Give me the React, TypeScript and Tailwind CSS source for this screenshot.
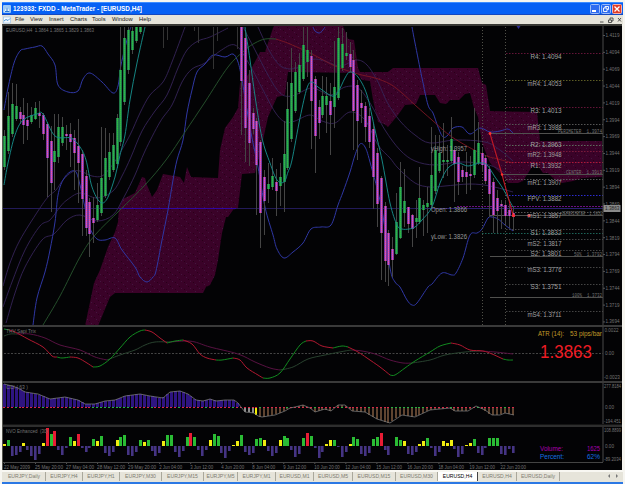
import type { ReactNode } from 'react';

type Pt = [number, number];

const STEP = 3.883;
const barX = (i: number) => 4.6 + STEP * i;

// [index, bodyTop, bodyBottom, wickTop, wickBottom, up]
const candles: [number, number, number, number, number, number][] = [
  [0, 136, 167, 130, 170, 1], [1, 116, 151, 92, 154, 1], [2, 104, 134, 83, 137, 1], [3, 106, 119, 84, 121, 1],
  [4, 112, 119, 107, 124, 0], [5, 115, 125, 98, 144, 0], [6, 120, 126, 103, 140, 0], [7, 115, 122, 107, 124, 1],
  [8, 108, 119, 102, 120, 1], [9, 113, 116, 101, 128, 0], [10, 115, 134, 113, 140, 0], [11, 124, 158, 122, 197, 0],
  [12, 141, 183, 126, 212, 0], [13, 151, 162, 114, 190, 1], [14, 127, 157, 114, 163, 1], [15, 127, 143, 117, 146, 1],
  [16, 134, 136, 125, 150, 0], [17, 134, 142, 123, 167, 0], [18, 138, 153, 130, 190, 0], [19, 146, 163, 119, 203, 0],
  [20, 154, 199, 150, 236, 0], [21, 176, 228, 170, 236, 0], [22, 202, 234, 198, 257, 0], [23, 218, 223, 197, 243, 0],
  [24, 205, 220, 183, 222, 1], [25, 178, 213, 127, 216, 1], [26, 158, 196, 128, 198, 1], [27, 152, 177, 133, 180, 1],
  [28, 145, 170, 133, 172, 1], [29, 118, 164, 114, 168, 1], [30, 70, 142, 27, 146, 1], [31, 38, 102, 27, 105, 1],
  [32, 30, 70, 27, 74, 1], [33, 31, 50, 27, 54, 1], [34, 27, 41, 27, 43, 1], [35, 27, 32, 27, 34, 1],
  [61, 27, 81, 27, 135, 0], [62, 38, 128, 30, 162, 0], [63, 83, 143, 70, 166, 0], [64, 113, 129, 108, 134, 0],
  [65, 121, 165, 118, 215, 0], [66, 142, 213, 140, 248, 0], [67, 177, 201, 170, 235, 0], [68, 184, 189, 163, 203, 1],
  [69, 176, 187, 158, 190, 1], [70, 182, 191, 169, 216, 0], [71, 177, 186, 163, 206, 1], [72, 154, 182, 121, 212, 1],
  [73, 109, 168, 82, 170, 1], [74, 83, 139, 48, 142, 1], [75, 72, 111, 62, 113, 1], [76, 65, 92, 53, 94, 1],
  [77, 45, 79, 27, 81, 1], [78, 50, 62, 27, 77, 1], [79, 56, 101, 50, 149, 0], [80, 79, 136, 76, 173, 0],
  [81, 107, 123, 100, 139, 0], [82, 96, 115, 76, 118, 1], [83, 96, 105, 77, 133, 1], [84, 101, 115, 83, 155, 0],
  [85, 87, 107, 41, 128, 1], [86, 38, 98, 27, 100, 1], [87, 44, 68, 28, 71, 1], [88, 53, 56, 32, 60, 1],
  [89, 54, 67, 42, 72, 0], [90, 60, 111, 50, 150, 0], [91, 85, 121, 80, 160, 0], [92, 103, 108, 90, 123, 0],
  [93, 106, 127, 102, 142, 0], [94, 116, 142, 108, 148, 0], [95, 129, 177, 124, 209, 0], [96, 153, 204, 148, 227, 0],
  [97, 178, 233, 176, 280, 0], [98, 206, 261, 202, 282, 0], [99, 233, 265, 230, 286, 0], [100, 249, 260, 237, 277, 0],
  [101, 222, 254, 193, 255, 1], [102, 187, 238, 162, 239, 1], [103, 201, 213, 169, 227, 1], [104, 207, 224, 207, 233, 0],
  [105, 215, 229, 214, 247, 0], [106, 218, 222, 200, 238, 1], [107, 198, 222, 167, 224, 1], [108, 205, 210, 200, 236, 1],
  [109, 203, 207, 187, 233, 1], [110, 175, 205, 127, 208, 1], [111, 150, 191, 135, 194, 1], [112, 153, 171, 135, 173, 1],
  [113, 160, 162, 123, 178, 1], [114, 160, 162, 145, 176, 1], [115, 139, 161, 117, 163, 1], [116, 150, 164, 147, 202, 0],
  [117, 157, 182, 152, 195, 0], [118, 170, 177, 166, 182, 0], [119, 172, 177, 152, 194, 0], [120, 174, 176, 156, 190, 0],
  [121, 150, 175, 108, 178, 1], [122, 143, 163, 122, 165, 1], [123, 153, 165, 148, 172, 0], [124, 158, 181, 155, 184, 0],
  [125, 169, 194, 166, 217, 0], [126, 182, 215, 178, 233, 0], [127, 198, 211, 190, 233, 0], [128, 204, 206, 200, 229, 0],
  [129, 205, 216, 200, 225, 0], [130, 210, 216, 204, 228, 0], [131, 213, 217, 206, 231, 0],
];

const highWicks: [number, number][] = [[41, 48], [42, 40], [49, 31], [50, 43], [54, 69], [55, 41], [60, 49]];

const cloud: Pt[] = [
  [85, 326], [94, 283], [100, 270], [108, 247], [115, 232], [118, 222], [119, 208], [123, 199], [135, 193], [142, 177],
  [145, 178], [147, 185], [152, 197], [157, 190], [163, 174], [180, 177], [184, 183], [187, 167], [191, 177], [218, 178],
  [220, 150], [225, 128], [233, 117], [238, 108], [240, 83], [248, 75], [260, 52], [265, 52], [273, 28], [274, 26],
  [343, 26], [348, 39], [354, 40], [358, 68], [360, 72], [388, 72], [393, 68], [478, 68], [482, 83], [486, 85],
  [490, 111], [537, 112], [540, 141], [602, 141], [602, 177], [582, 178], [573, 181], [562, 183], [555, 180], [548, 173],
  [543, 173], [538, 166], [532, 167], [528, 173], [523, 181], [518, 183], [508, 183], [500, 173], [490, 163], [482, 143],
  [478, 117], [474, 108], [470, 93], [465, 94], [459, 100], [450, 100], [446, 104], [440, 103], [435, 95], [420, 95],
  [416, 104], [405, 105], [398, 115], [388, 127], [384, 124], [378, 122], [373, 100], [370, 81], [362, 80], [357, 73],
  [288, 72], [285, 95], [277, 97], [268, 117], [263, 140], [255, 173], [242, 174], [238, 208], [233, 210], [228, 217],
  [226, 217], [222, 233], [218, 260], [215, 275], [210, 285], [206, 287], [203, 293], [115, 293], [110, 297], [98, 326],
];

const blueBands: Pt[][] = [
  [[4, 110], [8, 88], [14, 63], [20, 51], [25, 49], [35, 47], [42, 46], [48, 54], [55, 65], [58, 85], [68, 92], [78, 91], [83, 79], [90, 73], [102, 82], [113, 93], [118, 86], [121, 65], [128, 36], [131, 27]],
  [[33, 325], [37, 298], [45, 272], [50, 250], [55, 222], [58, 195], [63, 180], [70, 172], [76, 172], [80, 185], [84, 203], [90, 228], [97, 239], [105, 240], [115, 238], [122, 250], [135, 267], [140, 277], [147, 282], [153, 277], [156, 271], [162, 240], [168, 210], [173, 180], [177, 160], [183, 140], [187, 113], [192, 90], [197, 72], [205, 64], [213, 55], [225, 57], [233, 54], [238, 62], [242, 80], [247, 110], [252, 138], [258, 167], [265, 207], [273, 235], [277, 249], [284, 258], [293, 252], [303, 243], [311, 229], [321, 227], [331, 225], [338, 205], [343, 192], [350, 172], [355, 155], [360, 144], [365, 147], [370, 162], [382, 210], [390, 268], [395, 282], [400, 287], [407, 300], [412, 305], [417, 303], [428, 287], [432, 284], [442, 273], [452, 275], [456, 273], [463, 258], [470, 235], [477, 233], [482, 229], [488, 218], [492, 217], [498, 219], [505, 225], [513, 231]],
  [[313, 27], [315, 31], [319, 33], [322, 31], [325, 27]],
  [[412, 27], [415, 43], [422, 78], [428, 105], [433, 113], [438, 127], [443, 137], [448, 135], [453, 128], [462, 127], [470, 134], [480, 128], [490, 132], [500, 131], [508, 129], [513, 133]],
];

const dimBands: Pt[][] = [
  [[3, 286], [10, 263], [20, 240], [38, 211], [48, 197], [56, 190], [63, 180], [72, 172], [80, 171], [92, 176], [102, 176], [110, 168], [117, 158], [130, 135], [140, 113], [150, 95], [163, 82], [172, 62], [185, 27]],
  [[3, 307], [12, 282], [25, 250], [40, 226], [50, 220], [60, 207], [67, 200], [80, 193], [97, 198], [113, 191], [122, 176], [131, 157], [142, 131], [155, 111], [167, 95], [178, 68], [187, 50], [198, 41], [210, 37], [228, 28]],
  [[6, 323], [15, 293], [25, 267], [42, 240], [54, 234], [67, 220], [80, 215], [97, 221], [113, 215], [124, 197], [135, 175], [145, 151], [160, 122], [172, 105], [182, 82], [192, 69], [205, 63], [220, 51], [235, 45], [248, 62], [262, 88], [275, 112], [285, 122], [295, 121], [310, 115], [322, 121], [335, 123], [350, 112], [365, 120], [378, 145], [390, 158], [398, 168], [415, 183], [430, 187], [445, 186], [470, 184], [490, 186], [513, 192]],
  [[258, 27], [270, 52], [282, 67], [297, 68], [310, 60], [322, 60], [340, 66], [356, 60], [367, 65], [378, 82], [387, 102], [400, 121], [415, 135], [430, 143], [455, 140], [485, 142], [500, 150], [513, 161]],
  [[243, 27], [255, 50], [268, 75], [280, 93], [292, 96], [312, 88], [330, 95], [345, 87], [358, 88], [370, 103], [385, 130], [400, 150], [415, 161], [435, 165], [460, 162], [485, 164], [500, 170], [513, 180]],
];

const teal: Pt[][] = [
  [[4, 185], [8, 163], [15, 135], [23, 120], [37, 114], [43, 114], [55, 136], [71, 138], [80, 147], [86, 160], [92, 187], [100, 202], [107, 199], [115, 177], [120, 155], [125, 135], [130, 100], [137, 63], [145, 27]],
  [[245, 27], [250, 60], [255, 96], [262, 138], [270, 163], [277, 180], [284, 182], [288, 172], [292, 160], [300, 118], [307, 88], [312, 82], [318, 87], [332, 96], [338, 92], [345, 78], [350, 72], [358, 77], [367, 95], [375, 130], [382, 160], [390, 203], [397, 225], [402, 229], [409, 229], [415, 227], [422, 220], [432, 207], [440, 183], [448, 168], [458, 163], [468, 166], [480, 163], [487, 165], [495, 177], [502, 187], [508, 198], [513, 207]],
];

const greenMa: Pt[] = [[43, 325], [60, 296], [80, 257], [95, 235], [120, 210], [145, 185], [166, 160], [185, 132], [205, 102], [228, 67], [245, 50], [255, 43], [265, 39], [276, 39]];
const redMa: Pt[] = [[276, 39], [290, 44], [312, 54], [335, 66], [358, 74], [375, 78], [390, 84], [402, 93], [415, 105], [432, 120], [452, 137], [482, 154], [498, 159], [513, 163]];

// label, label y, line y, line colour
const pivots: [string, number, number, string][] = [
  ['R4: 1.4094', 57, 53.5, '#641438'], ['mR4: 1.4053', 84, 80.5, '#5c5c24'], ['R3: 1.4013', 111, 107.5, '#641438'],
  ['mR3: 1.3988', 128, 124.5, '#555'], ['R2: 1.3963', 145, 145.5, '#5c6b5c'], ['mR2: 1.3948', 155, 151.5, '#7a1838'],
  ['R1: 1.3932', 166, 162.5, '#b01838'], ['mR1: 1.3907', 183, 179.5, '#555'], ['FPV: 1.3882', 199, 195.5, '#2c2cd0'],
  ['mS1: 1.3857', 216, 212.5, '#555'], ['S1: 1.3832', 233, 229.5, '#444'], ['mS2: 1.3817', 244, 239.5, '#444'],
  ['S2: 1.3801', 254, 250.5, '#444'], ['mS3: 1.3776', 270, 267.5, '#444'], ['S3: 1.3751', 287, 284.5, '#444'],
  ['mS4: 1.3711', 315, 311.5, '#444'],
];

// label, y, start x, text width
const fibs: [string, number, number, number][] = [
  ['PERIMETER  1.3974', 133.5, 490, 44], ['CENTER  1.3913', 174.5, 502, 36], ['DEPERIMETER  1.3852', 215.5, 490, 40],
  ['50%  1.3792', 256.5, 490, 28], ['100%  1.3732', 297.5, 490, 30],
];

const prices = ['1.4119', '1.4094', '1.4069', '1.4044', '1.4019', '1.3994', '1.3969', '1.3944', '1.3919', '1.3894', '1.3869', '1.3844', '1.3819', '1.3794', '1.3769', '1.3744', '1.3719', '1.3694'];

const tmaLine: [string, Pt[]][] = [
  ['g', [[4, 329], [9, 330]]],
  ['r', [[9, 330], [15, 332], [28, 339], [43, 347], [52, 356], [57, 357]]],
  ['g', [[57, 357], [62, 358], [70, 357]]],
  ['r', [[70, 357], [78, 358], [87, 363], [93, 367]]],
  ['g', [[93, 367], [100, 366], [110, 359], [120, 348], [130, 337], [140, 331], [145, 330]]],
  ['r', [[145, 330], [152, 332], [160, 338], [167, 343]]],
  ['g', [[167, 343], [175, 341], [183, 340]]],
  ['r', [[183, 340], [192, 344], [200, 354], [207, 358], [216, 360]]],
  ['g', [[216, 360], [222, 360], [233, 358]]],
  ['r', [[233, 358], [240, 360], [247, 368], [258, 375], [263, 378]]],
  ['g', [[263, 378], [270, 378], [280, 373], [290, 359], [300, 345], [306, 341]]],
  ['r', [[306, 341], [313, 341], [322, 346], [333, 348]]],
  ['g', [[333, 348], [342, 346], [348, 347]]],
  ['r', [[348, 347], [358, 352], [367, 358], [380, 367], [390, 375]]],
  ['g', [[390, 375], [395, 375], [405, 368], [415, 361], [430, 352], [440, 346], [451, 343]]],
  ['r', [[451, 343], [460, 345], [470, 350], [483, 351], [492, 354], [503, 359]]],
  ['g', [[503, 359], [508, 360], [513, 360]]],
];

const tmaSignal: [string, Pt[]][] = [
  ['g', [[4, 336], [10, 334], [17, 334]]],
  ['r', [[17, 334], [30, 334], [45, 338], [60, 345], [80, 350], [95, 357], [107, 360]]],
  ['g', [[107, 360], [120, 355], [135, 350], [145, 345], [155, 342], [170, 342]]],
  ['r', [[170, 342], [185, 341], [195, 342], [210, 347], [238, 354], [255, 362], [270, 368], [280, 370]]],
  ['g', [[280, 370], [293, 367], [308, 359], [325, 355], [345, 351], [352, 350]]],
  ['r', [[352, 350], [362, 351], [375, 354], [390, 360], [403, 363], [412, 363]]],
  ['g', [[412, 363], [430, 360], [445, 355], [465, 352], [480, 351]]],
  ['r', [[480, 351], [495, 352], [513, 354]]],
];

const cci: Pt[] = [
  [4, 384], [12, 386], [18, 388], [25, 392], [38, 394], [50, 399], [65, 397], [78, 400], [85, 404], [95, 404],
  [105, 401], [115, 400], [125, 396], [140, 394], [150, 396], [163, 398], [170, 392], [180, 391], [188, 394], [196, 400],
  [203, 401], [210, 399], [216, 401], [225, 400], [234, 400], [238, 403], [241, 407], [245, 412], [254, 413], [258, 416],
  [262, 417], [275, 415], [285, 411], [290, 408], [295, 407], [303, 405], [310, 408], [315, 412], [325, 409], [331, 411],
  [338, 405], [345, 405], [352, 411], [365, 412], [377, 419], [390, 423], [402, 415], [415, 417], [430, 410], [450, 408],
  [455, 411], [468, 411], [476, 406], [485, 410], [492, 415], [500, 415], [505, 413], [514, 415],
];

// signed bar heights, positive is up
const volume = [
  2, 6, -10, -9, -6, 3, -4, -10, -14, -8, 3, 18, 12, 15, -4, -9, -2, 9, 5, 12, -2, -6, -2, 7, 5, 10, -7, -10, -6, 6, 9, 11, -9, -10, -6,
  6, 4, 6, -5, -10, -7, 5, 11, 11, -6, -11, -5, 9, 13, 9, -4, -10, -4, 6, 12, 10, -7, -12, -5, 1, 5, 11, -6, -9, -7, 7, 8, 6, -5, -10,
  -7, 6, 10, 8, -4, -11, -8, 8, 13, 10, -2, -12, -6, 2, 6, 6, -1, -11, -6, 2, 9, 7, -8, -10, -7, 7, 9, 13, -4, -9, 0, 9, 6, 5, -8, -9,
  -6, 2, 5, 8, -2, -10, -6, 5, 3, 6, -3, -11, -8, 1, 3, 7, -7, -9, -2, 8, 8, 8, -8, -9, -3, -7,
];
const redVolume = [11, 13, 19, 48, 78, 97];
const yellowVolume = [0, 5, 10, 18, 24, 29, 36, 41, 53, 59, 60, 67, 71, 83, 84, 89, 103, 107, 108, 113, 114, 115, 119, 120];

// label, text width
const dates: [string, number][] = [
  ['22 May 2009', 26], ['25 May 20:00', 28], ['27 May 04:00', 28], ['28 May 12:00', 28], ['29 May 20:00', 28],
  ['2 Jun 04:00', 23], ['3 Jun 12:00', 23], ['4 Jun 20:00', 23], ['8 Jun 04:00', 23], ['9 Jun 12:00', 23],
  ['10 Jun 20:00', 25.5], ['12 Jun 04:00', 25.5], ['15 Jun 12:00', 25.5], ['16 Jun 20:00', 25.5],
  ['18 Jun 04:00', 25.5], ['19 Jun 12:00', 25.5], ['22 Jun 20:00', 25.5],
];

const menus: [string, string][] = [
  ['File', 'w-[15px]'], ['View', 'w-[19px]'], ['Insert', 'w-[21px]'], ['Charts', 'w-[22px]'],
  ['Tools', 'w-[20px]'], ['Window', 'w-[27px]'], ['Help', 'w-[14px]'],
];

const tabs: [string, string][] = [
  ['EURJPY,Daily', 'w-[43px]'], ['EURJPY,H4', 'w-[37px]'], ['EURJPY,H1', 'w-[37px]'], ['EURJPY,M30', 'w-[42px]'],
  ['EURJPY,M15', 'w-[42px]'], ['EURJPY,M5', 'w-[34px]'], ['EURJPY,M1', 'w-[38px]'], ['EURUSD,M1', 'w-[38px]'],
  ['EURUSD,M5', 'w-[39px]'], ['EURUSD,M15', 'w-[43px]'], ['EURUSD,M30', 'w-[42px]'], ['EURUSD,H4', 'w-[40px]'],
  ['EURUSD,H4', 'w-[39px]'], ['EURUSD,Daily', 'w-[43px]'],
];

const curve = (p: Pt[]) => {
  let d = `M${p[0][0]} ${p[0][1]}`;
  for (let i = 0; i < p.length - 1; i++) {
    const a = p[i - 1] || p[i];
    const b = p[i];
    const c = p[i + 1];
    const e = p[i + 2] || c;
    d += `C${b[0] + (c[0] - a[0]) / 6} ${b[1] + (c[1] - a[1]) / 6} ${c[0] - (e[0] - b[0]) / 6} ${c[1] - (e[1] - b[1]) / 6} ${c[0]} ${c[1]}`;
  }
  return d;
};

const valueAt = (points: Pt[], x: number) => {
  const k = points.findIndex((p) => p[0] >= x);
  if (k <= 0) return points[k === 0 ? 0 : points.length - 1][1];
  const [x0, y0] = points[k - 1];
  const [x1, y1] = points[k];
  return y0 + ((y1 - y0) * (x - x0)) / (x1 - x0);
};

interface LabelProps {
  x: number;
  y: number;
  w: number;
  size?: number;
  fill?: string;
  children: ReactNode;
}

const Label = ({ x, y, w, size = 5.2, fill = '#747474', children }: LabelProps) => (
  <text x={x} y={y} fontSize={size} textLength={w} lengthAdjust="spacingAndGlyphs" fill={fill} className="whitespace-pre">
    {children}
  </text>
);

const PriceChart = () => (
  <svg viewBox="3 26 619 299" className="block w-[619px] h-[299px] shrink-0" fill="none">
    <defs>
      <pattern id="cloudDots" width="9" height="7" patternUnits="userSpaceOnUse">
        <rect width="9" height="7" fill="#3a0228" />
        <path d="M1 1h1v1h-1zM6 4h1v1h-1z" fill="#44163f" />
        <path d="M4 2h1v1h-1zM8 6h1v1h-1z" fill="#280018" />
      </pattern>
    </defs>
    <path d={`M${cloud.map((p) => p.join(' ')).join('L')}Z`} fill="url(#cloudDots)" />

    <path d="M3 208.5H603" stroke="#221a58" />
    <path d="M119 208.5H236" stroke="#3006a0" />
    <path d="M415 208.5H603" stroke="#2a2070" />

    {dimBands.map((b, i) => <path key={i} d={curve(b)} stroke="#352458" strokeWidth={0.9} />)}
    {blueBands.map((b, i) => <path key={i} d={curve(b)} stroke="#2f37a4" />)}
    <path d={curve(greenMa)} stroke="#28562f" strokeWidth={0.9} />
    <path d={curve(redMa)} stroke="#7d1624" strokeWidth={0.9} />

    <path d="M482.5 27V325M505.5 27V325" stroke="#505048" strokeDasharray="1 2" />
    {pivots.map(([label, , y, color]) => <path key={label} d={`M506 ${y}H603`} stroke={color} strokeDasharray="1.5 1.5" />)}
    <path d="M457 206.5H603" stroke="#6a1080" strokeDasharray="2 1" />
    <path d="M482 233.5H603" stroke="#1c6458" strokeDasharray="1.5 1.5" />
    {fibs.map(([label, y, x]) => <path key={label} d={`M${x} ${y}H603`} stroke="#50504e" />)}

    {highWicks.map(([i, y]) => <path key={i} d={`M${Math.round(barX(i)) - 0.5} 27V${y}`} stroke="#333333" />)}
    {candles.map(([i, top, bottom, high, low, up]) => {
      const x = Math.round(barX(i) - 0.6);
      return (
        <g key={i}>
          <rect x={x} y={high} width={1} height={low - high} fill="#444444" />
          <rect x={x - 1} y={top} width={3} height={bottom - top} fill={up ? '#1f7a48' : '#7a369c'} />
          <rect x={x} y={top} width={1} height={bottom - top} fill={up ? '#2da454' : '#b858e8'} />
          <path d={`M${x + 0.5} ${top}V${bottom}`} stroke={up ? '#30c03c' : '#f45488'} strokeDasharray="1 1" />
        </g>
      );
    })}
    {teal.map((t, i) => <path key={i} d={curve(t)} stroke="#168a88" strokeWidth={0.95} />)}

    <path d="M490 133.5L502 174.5L513 215" stroke="#c01826" strokeWidth={1.1} />
    <g fill="#ff3030">
      <circle cx={490} cy={133.5} r={1.4} />
      <circle cx={502} cy={174.5} r={1.2} />
      <circle cx={513.5} cy={215.5} r={1.6} />
      <circle cx={529} cy={215.5} r={1.6} />
    </g>
    <path d="M516.5 26h4l-2 3z" fill="#2a2a90" />

    {pivots.map(([label, y]) => {
      const w = label.length > 10 ? 34 : 31;
      return <Label key={label} x={561.5 - w} y={y + 2.3} w={w} size={6.5} fill="#a2a2a2">{label}</Label>;
    })}
    <Label x={431} y={151} w={36} size={6.5} fill="#989898">yHigh: 1.3957</Label>
    <Label x={431} y={212} w={36} size={6.5} fill="#989898">Open: 1.3866</Label>
    <Label x={431} y={239} w={36} size={6.5} fill="#989898">yLow: 1.3826</Label>
    <g fontFamily="Liberation Mono">
      {fibs.map(([label, y, , w]) => <Label key={label} x={602 - w} y={y - 1} w={w} size={4.8}>{label}</Label>)}
    </g>
    <Label x={6} y={32.2} w={88}>EURUSD,H4  1.3864 1.3865 1.3829 1.3863</Label>

    <path d="M603 26V325" stroke="#4a4a4a" />
    {prices.map((p, i) => (
      <g key={p}>
        <path d={`M603 ${35.5 + i * 16.85}h2`} stroke="#555" />
        <Label x={605.5} y={(i === 17 ? 36.4 : 37.3) + i * 16.85} w={14}>{p}</Label>
      </g>
    ))}
    <rect x={603.5} y={205} width={17} height={7} fill="#8a8a8a" />
    <Label x={605} y={210.4} w={14.5} fill="#222">1.3863</Label>
  </svg>
);

const TmaPanel = () => (
  <svg viewBox="3 327 619 54" className="block w-[619px] h-[54px] shrink-0" fill="none">
    <path d="M4 353.5H603" stroke="#444" strokeDasharray="2 1.5" />
    {tmaSignal.map(([c, p], i) => <path key={i} d={curve(p)} stroke={c === 'g' ? '#2a4430' : '#5c1244'} strokeWidth={0.95} />)}
    {tmaLine.map(([c, p], i) => <path key={i} d={curve(p)} stroke={c === 'g' ? '#128a20' : '#b01830'} />)}
    <Label x={6} y={333.4} w={30}>THV Sapi Trix</Label>
    <Label x={538} y={335.8} w={26} size={6.8} fill="#c09a28">ATR (14):</Label>
    <Label x={570} y={335.8} w={32} size={6.8} fill="#c09a28">53 pips/bar</Label>
    <Label x={540} y={358} w={52} size={18} fill="#ee1c24">1.3863</Label>
    <path d="M603 327V381" stroke="#4a4a4a" />
    <Label x={604.5} y={332.4} w={14}>0.0022</Label>
    <Label x={605} y={355} w={9}>0.00</Label>
    <Label x={604} y={379.3} w={16}>-0.0023</Label>
  </svg>
);

const CciPanel = () => (
  <svg viewBox="3 383 619 41" className="block w-[619px] h-[41px] shrink-0" fill="none">
    {Array.from({ length: 132 }, (_, i) => {
      const x = Math.round(barX(i) - 0.6);
      const y = Math.round(valueAt(cci, barX(i)));
      const fill = i === 65 ? '#f4f000' : i < 61 ? '#2e1480' : i < 65 ? '#8c8c8c' : '#5f4430';
      const rising = (i > 22 && i < 34) || (i > 99 && i < 109) || i % 7 === 3;
      return (
        <g key={i}>
          <rect x={x - 1} y={Math.min(y, 407)} width={i < 61 ? 3 : 2} height={Math.abs(407 - y)} fill={fill} />
          <rect x={x - 1} y={407} width={2} height={1} fill={rising ? '#28b040' : '#d82848'} />
        </g>
      );
    })}
    <path d={`M${cci.map((p) => p.join(' ')).join('L')}`} stroke="#777777" strokeWidth={0.8} />
    <Label x={6} y={388.8} w={22}>CCI ( 63 )</Label>
    <path d="M603 383V424" stroke="#4a4a4a" />
    <Label x={604} y={388.2} w={17}>277.8184</Label>
    <Label x={605} y={409} w={9}>0.00</Label>
    <Label x={604} y={422.6} w={17}>-194.451</Label>
  </svg>
);

const VolumePanel = () => (
  <svg viewBox="3 427 619 35" className="block w-[619px] h-[35px] shrink-0">
    {volume.map((h, i) => {
      const color = h < 0 ? '#453484' : redVolume.includes(i) ? '#e81c34' : yellowVolume.includes(i) ? '#f0ec10' : '#2abc34';
      return <rect key={i} x={Math.round(barX(i) - 1.6)} y={h > 0 ? 446 - h : 446} width={h < 0 ? 2.6 : 3} height={Math.abs(h)} fill={color} />;
    })}
    <Label x={6} y={433} w={42}>NVO Enhanced  (30)</Label>
    <Label x={540} y={451.4} w={23} size={6.5} fill="#a800b0">Volume:</Label>
    <Label x={587} y={451.4} w={13} size={6.5} fill="#a800b0">1625</Label>
    <Label x={540} y={459} w={24} size={6.5} fill="#1470e0">Percent:</Label>
    <Label x={587} y={459} w={13} size={6.5} fill="#1470e0">62%</Label>
    <rect x={602.5} y={427} width={1} height={35} fill="#4a4a4a" />
    <Label x={604} y={432.2} w={17}>108.8899</Label>
    <Label x={605} y={448} w={9}>0.00</Label>
    <Label x={604} y={460.6} w={17}>-89.2034</Label>
  </svg>
);

const Divider = () => <div className="h-[2px] shrink-0 bg-[#3a3a3a]" />;

const App = () => {
  return (
    <div className="w-[625px] h-[484px] overflow-hidden bg-[#f6f5f0] flex flex-col font-['Liberation_Sans',sans-serif]">
      {/* Title bar */}
      <div className="mt-[2px] ml-[2px] mr-[2px] h-[13px] shrink-0 flex items-center bg-[#0660f4] border-t border-[#3c8cff] border-b border-b-[#1448c0]">
        <svg viewBox="0 0 8 8" className="w-[8px] h-[8px] ml-[1px]">
          <rect width="8" height="8" rx="1" fill="#9cc8f4" />
          <path d="M1 7L4 1.5L7 7Z" fill="#e8f4ff" />
          <path d="M4 2.5V6.5M2 6.5H6.5" stroke="#2478d8" strokeWidth="1" />
        </svg>
        <svg viewBox="0 0 136 11" className="w-[136px] h-[11px] ml-[2px] font-bold">
          <Label x={0} y={7.8} w={129} size={6.9} fill="#ffffff">123933: FXDD - MetaTrader - [EURUSD,H4]</Label>
        </svg>
        <div className="ml-auto flex gap-[1px] mr-[1px]">
          <div className="w-[10px] h-[10px] rounded-[1.5px] border border-[#9cbcf8] bg-[#2f6cf0] flex items-end pb-[1px] pl-[1px]">
            <div className="w-[4px] h-[1.5px] bg-white" />
          </div>
          <div className="w-[10px] h-[10px] rounded-[1.5px] border border-[#9cbcf8] bg-[#2f6cf0]">
            <svg viewBox="0 0 8 8" className="w-full h-full" fill="none" stroke="#fff" strokeWidth="0.9">
              <path d="M3 3V1.5H6.5V4.5H5M1.5 3H5V6.5H1.5Z" />
            </svg>
          </div>
          <div className="w-[10px] h-[10px] rounded-[1.5px] border border-[#f4b0a8] bg-[#e03c28]">
            <svg viewBox="0 0 8 8" className="w-full h-full" stroke="#fff" strokeWidth="1.3">
              <path d="M1.5 1.5L6.5 6.5M6.5 1.5L1.5 6.5" />
            </svg>
          </div>
        </div>
      </div>

      {/* Menu bar */}
      <div className="ml-[2px] mr-[2px] h-[9px] shrink-0 flex items-center bg-[#e6e4da] text-[5.8px] leading-none text-[#222]">
        <svg viewBox="0 0 8 8" className="w-[8px] h-[8px] ml-[1px] mr-[4px]" fill="none">
          <rect x="0.5" y="1" width="7" height="6" fill="#f4faff" stroke="#9cc4e8" strokeWidth="0.7" />
          <path d="M1 5L3 3.5L5 4.5L7 2.5" stroke="#3c8cd0" strokeWidth="0.9" />
        </svg>
        {menus.map(([name, width]) => (
          <span key={name} className={`${width} shrink-0`}>{name}</span>
        ))}
        <svg viewBox="0 0 24 8" className="w-[24px] h-[8px] ml-auto" fill="none" stroke="#444" strokeWidth="0.9">
          <path d="M1 6H4.500M11 4V2H14V5H13M9.500 4H12.500V6.500H9.500ZM19 2L22 5.500M22 2L19 5.500" />
        </svg>
      </div>

      {/* Chart window */}
      <div className="ml-[2px] mr-[3px] h-[446px] shrink-0 flex flex-col bg-[#030305] border-l border-t-2 border-l-[#55554e] border-t-[#383834]">
        <PriceChart />
        <Divider />
        <TmaPanel />
        <Divider />
        <CciPanel />
        <div className="h-[3px] shrink-0 bg-[#2e2e2e] border-t border-[#151515]" />
        <VolumePanel />
        <div className="h-[8px] w-[600px] shrink-0 border-t border-[#444]">
          <svg viewBox="3 463 600 7" className="block w-[600px] h-[7px]">
            {dates.map(([date, w], i) => (
              <g key={date}>
                <rect x={4 + i * 31.03} y={463} width={1} height={1} fill="#555" />
                <Label x={4 + i * 31.03} y={468.6} w={w}>{date}</Label>
              </g>
            ))}
          </svg>
        </div>
      </div>

      {/* Chart tabs */}
      <div className="ml-[2px] mr-[2px] h-[12px] shrink-0 flex items-stretch pl-[1px] pb-[1px] bg-[#e6e4da] border-t-2 border-[#f8f7f2] text-[5.1px] leading-none">
        {tabs.map(([name, width], i) => (
          <div
            key={i}
            className={`${width} shrink-0 flex items-center justify-center whitespace-nowrap border-r ${i === 11 ? 'bg-white text-black border-[#444]' : 'text-[#7d7b70] border-[#aaa89c]'}`}
          >
            {name}
          </div>
        ))}
        <svg viewBox="0 0 14 8" className="w-[14px] h-[8px] ml-auto mr-[3px]" fill="#777">
          <path d="M4 2V6L2 4ZM10 2V6L12 4Z" />
        </svg>
      </div>
      <div className="ml-[2px] mr-[2px] flex-1 bg-[#2c78e4]" />
    </div>
  );
};

export default App;
